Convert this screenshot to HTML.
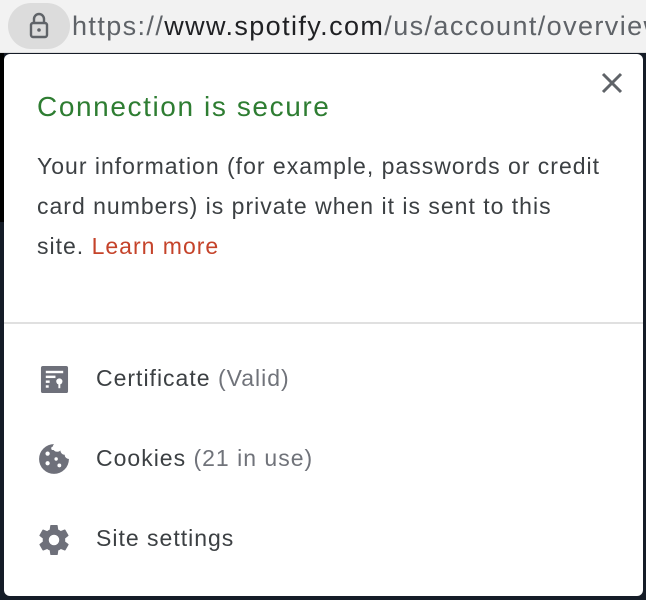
<!DOCTYPE html>
<html><head><meta charset="utf-8"><style>
html,body{margin:0;padding:0;width:646px;height:600px;overflow:hidden;font-family:"Liberation Sans",Arial,sans-serif;}
body{background:#151c27;position:relative;}
.left{position:absolute;left:0;top:52px;width:4px;height:170px;background:#000;}
.top{position:absolute;left:0;top:0;width:646px;height:52px;background:#f2f2f2;border-bottom:1px solid #ddd;}
.lockbtn{position:absolute;left:8px;top:3px;width:62px;height:46px;border-radius:23px;background:#dcdcdc;}
.url{position:absolute;left:72px;top:11px;font-size:27px;letter-spacing:1.4px;color:#5f6368;white-space:nowrap;}
.url b{font-weight:normal;color:#202124}
.pop{position:absolute;left:4px;top:54px;width:639px;height:542px;background:#fff;border-radius:6px;}
.title{position:absolute;left:33px;top:37px;font-size:28px;letter-spacing:1.6px;color:#2e7d32;white-space:nowrap}
.body{position:absolute;left:33px;top:92px;width:606px;font-size:23px;letter-spacing:1px;line-height:40px;color:#3c4043;white-space:nowrap}
.body a{color:#c5432a;text-decoration:none}
.hr{position:absolute;left:0;top:268px;width:639px;height:2px;background:#e0e0e0;}
.item{position:absolute;left:92px;font-size:23px;letter-spacing:1px;color:#3c4043;white-space:nowrap}
.item span{color:#70737a}
.ic{position:absolute;}
</style></head><body>
<div class="left"></div>
<div class="top">
<div class="lockbtn">
<svg width="62" height="46" viewBox="0 0 62 46"><rect x="23" y="20" width="16" height="14" rx="2" fill="none" stroke="#5f6368" stroke-width="2.4"/><path d="M26 20v-4a5 5 0 0 1 10 0v4" fill="none" stroke="#5f6368" stroke-width="2.4"/><circle cx="31" cy="27" r="1.8" fill="#5f6368"/></svg>
</div>
<div class="url">https://<b>www.spotify.com</b>/us/account/overview</div>
</div>
<div class="pop">
<div class="title">Connection is secure</div>
<div class="body">Your information (for example, passwords or credit<br>card numbers) is private when it is sent to this<br>site. <a>Learn more</a></div>
<div class="hr"></div>
<svg class="ic" style="left:36px;top:311px" width="29" height="29" viewBox="0 0 30 30"><rect x="1" y="1" width="28" height="28" rx="2" fill="#6e707a"/><rect x="6" y="6" width="18" height="2.5" fill="#fff"/><rect x="6" y="11" width="10" height="2.5" fill="#fff"/><rect x="6" y="16" width="4" height="2.5" fill="#fff"/><rect x="6" y="21" width="3" height="2.5" fill="#fff"/><circle cx="20" cy="17" r="3.2" fill="#fff"/><rect x="19" y="18" width="2" height="6" fill="#fff"/></svg>
<div class="item" style="top:311px">Certificate <span>(Valid)</span></div>
<svg class="ic" style="left:34px;top:389px" width="32" height="32" viewBox="0 0 30 30"><path d="M15 1a14 14 0 1 0 14 14a4 4 0 0 1-4-4a4 4 0 0 1-4-4a4 4 0 0 1-6-6z" fill="#6e707a"/><circle cx="9" cy="10" r="2" fill="#fff"/><circle cx="14" cy="5" r="1.6" fill="#fff"/><circle cx="9" cy="19" r="2" fill="#fff"/><circle cx="17" cy="15" r="1.6" fill="#fff"/><circle cx="20" cy="21" r="1.8" fill="#fff"/></svg>
<div class="item" style="top:391px">Cookies <span>(21 in use)</span></div>
<svg class="ic" style="left:32px;top:468px" width="36" height="36" viewBox="0 0 24 24"><path fill="#6e707a" d="M19.4 13c.04-.3.06-.6.06-1s-.02-.7-.07-1l2.1-1.65c.2-.15.24-.42.12-.64l-2-3.46c-.12-.22-.4-.3-.6-.22l-2.5 1c-.52-.4-1.080-.73-1.7-.98l-.37-2.65A.5.5 0 0 0 14 2h-4a.5.5 0 0 0-.5.42l-.37 2.65c-.62.25-1.18.6-1.7.98l-2.5-1a.5.5 0 0 0-.6.22l-2 3.46c-.13.22-.07.5.12.64L4.57 11c-.04.3-.07.67-.07 1s.02.7.07 1l-2.1 1.65c-.2.15-.25.42-.13.64l2 3.46c.12.22.4.3.6.22l2.5-1c.52.4 1.080.73 1.7.98l.37 2.65c.04.24.25.42.5.42h4c.25 0 .46-.18.5-.42l.37-2.65c.62-.25 1.180-.58 1.7-.98l2.5 1c.22.08.48 0 .6-.22l2-3.46c.12-.22.07-.5-.12-.64L19.4 13zM12 15.5a3.5 3.5 0 1 1 0-7 3.5 3.5 0 0 1 0 7z"/></svg>
<div class="item" style="top:471px">Site settings</div>
<svg class="ic" width="24" height="24" viewBox="0 0 24 24" style="left:596px;top:17px"><path d="M3 3L21 21M21 3L3 21" stroke="#5f6368" stroke-width="3"/></svg>
</div>
</body></html>
